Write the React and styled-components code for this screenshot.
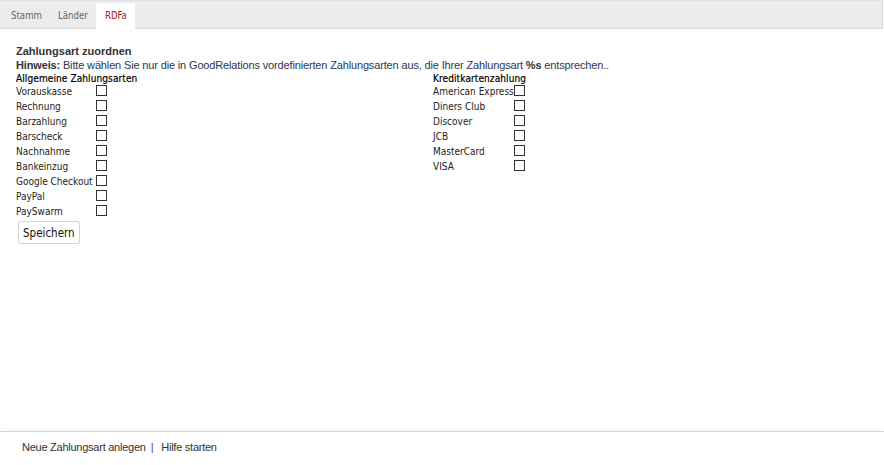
import React from "react";
import styled, { createGlobalStyle } from "styled-components";

const GlobalStyle = createGlobalStyle`
  html, body { margin: 0; padding: 0; background: #fff; }
  #root { height: 465px; }
`;

const Page = styled.div`
  height: 465px;
  display: flex;
  flex-direction: column;
  font-family: "Liberation Sans", Arial, sans-serif;
  color: #333;
`;

const TabBar = styled.div`
  height: 27px;
  display: flex;
  align-items: flex-end;
  padding-left: 3px;
  background: #ececec;
  border-top: 1px solid #e2e2e2;
  border-bottom: 1px solid #d8d8d8;
  border-right: 1px solid #d8d8d8;
  margin-right: 1px;
`;

const Tab = styled.div`
  height: 25px;
  margin-bottom: -1px;
  padding: ${(p) => (p.$active ? "0 8px 0 9px" : "0 8px")};
  display: flex;
  align-items: center;
  font-family: "DejaVu Sans Condensed", "DejaVu Sans", sans-serif;
  font-size: 9.6px;
  color: ${(p) => (p.$active ? "#a0232b" : "#666")};
  background: ${(p) => (p.$active ? "#fff" : "transparent")};
  border-bottom: 1px solid ${(p) => (p.$active ? "#fff" : "transparent")};
`;

const Content = styled.div`
  flex: 1;
  padding: 15px 16px 0;
`;

const Heading = styled.div`
  font-weight: bold;
  font-size: 11px;
  line-height: 14px;
`;

const Hint = styled.div`
  font-size: 11px;
  line-height: 15px;
  letter-spacing: -0.15px;
  color: #2b3650;
  b { color: #333; }
`;

const Columns = styled.div`
  display: grid;
  grid-template-columns: 417px 1fr;
`;

const Group = styled.div`
  display: flex;
  flex-direction: column;
`;

const GroupTitle = styled.div`
  font-family: "DejaVu Sans Condensed", "DejaVu Sans", sans-serif;
  font-size: 10px;
  line-height: 11px;
  letter-spacing: 0.1px;
  color: #000;
  -webkit-text-stroke: 0.2px #000;
`;

const Options = styled.div`
  display: grid;
  grid-template-columns: ${(p) => p.$labelWidth} max-content;
  grid-auto-rows: 15px;
`;

const Label = styled.span`
  font-family: "DejaVu Sans Condensed", "DejaVu Sans", sans-serif;
  font-size: 10px;
  line-height: 15px;
  color: #222;
`;

const Check = styled.span`
  width: 9px;
  height: 9px;
  margin-top: 1px;
  border: 1px solid #333;
  background: #fff;
`;

const Button = styled.button`
  align-self: flex-start;
  margin: 2px 0 0 2px;
  height: 23px;
  padding: 0 4px;
  font-family: "DejaVu Sans Condensed", "DejaVu Sans", sans-serif;
  font-size: 11.5px;
  color: #111;
  background: #fff;
  border: 1px solid #d4d4d4;
  border-radius: 2px;
`;

const Footer = styled.div`
  height: 34px;
  box-sizing: border-box;
  padding: 0 0 3px 22px;
  border-top: 1px solid #d6d6d6;
  box-shadow: 0 -4px 6px -3px rgba(0, 0, 0, 0.06);
  display: flex;
  align-items: center;
  font-size: 11px;
  letter-spacing: -0.25px;
  color: #333;
`;

const Sep = styled.span`
  color: #4a3a7a;
  margin: 0 8px 0 5px;
`;

const general = ["Vorauskasse", "Rechnung", "Barzahlung", "Barscheck", "Nachnahme", "Bankeinzug", "Google Checkout", "PayPal", "PaySwarm"];
const cards = ["American Express", "Diners Club", "Discover", "JCB", "MasterCard", "VISA"];

function OptionList({ items, labelWidth }) {
  return (
    <Options $labelWidth={labelWidth}>
      {items.map((it) => (
        <React.Fragment key={it}>
          <Label>{it}</Label>
          <Check />
        </React.Fragment>
      ))}
    </Options>
  );
}

export default function App() {
  return (
    <Page>
      <GlobalStyle />
      <TabBar>
        <Tab>Stamm</Tab>
        <Tab>Länder</Tab>
        <Tab $active>RDFa</Tab>
      </TabBar>
      <Content>
        <Heading>Zahlungsart zuordnen</Heading>
        <Hint>
          <b>Hinweis:</b> Bitte wählen Sie nur die in GoodRelations vordefinierten Zahlungsarten aus, die Ihrer Zahlungsart <b>%s</b> entsprechen..
        </Hint>
        <Columns>
          <Group>
            <GroupTitle>Allgemeine Zahlungsarten</GroupTitle>
            <OptionList items={general} labelWidth="80px" />
            <Button>Speichern</Button>
          </Group>
          <Group>
            <GroupTitle>Kreditkartenzahlung</GroupTitle>
            <OptionList items={cards} labelWidth="81px" />
          </Group>
        </Columns>
      </Content>
      <Footer>
        Neue Zahlungsart anlegen<Sep>|</Sep>Hilfe starten
      </Footer>
    </Page>
  );
}
